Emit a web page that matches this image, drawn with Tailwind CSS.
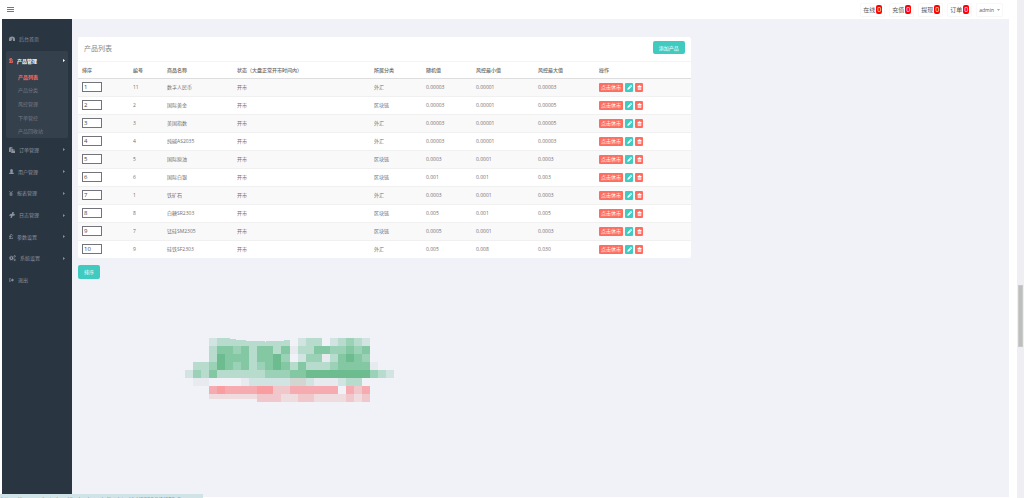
<!DOCTYPE html>
<html lang="zh-CN">
<head>
<meta charset="utf-8">
<title>产品列表</title>
<script src="https://cdn.jsdelivr.net/npm/@tailwindcss/browser@4"></script>
</head>
<body class="flex min-h-screen bg-white font-['Open_Sans','Noto_Sans_CJK_SC',sans-serif] text-[5px] leading-[8px] text-[#707070]">
<svg class="hidden">
  <symbol id="caret" viewBox="0 0 4 6"><path d="M0 0 4 3 0 6Z" fill="currentColor"/></symbol>
  <symbol id="pencil" viewBox="0 0 16 16"><path d="M1 15l1-5 7-7 4 4-7 7zM10 2l1.500-1.500q1-.7 2 .2l1.800 1.800q.9 1 .2 2L14 6z" fill="currentColor"/></symbol>
  <symbol id="trash" viewBox="0 0 16 16"><path fill-rule="evenodd" d="M1 3h4l1-2h4l1 2h4v2h-1.500v10h-11V5H1zM5 6v7h1.200V6zM7.400 6v7h1.200V6zM9.800 6v7H11V6z" fill="currentColor"/></symbol>
</svg>

<div class="flex min-w-0 flex-1 flex-col">
  <header class="flex h-[19px] items-center justify-between pr-[14px] pl-[7px]">
    <button type="button" aria-label="菜单" class="flex h-[7px] w-[7px] flex-col justify-between py-px">
      <span class="h-px w-full bg-[#777]"></span><span class="h-px w-full bg-[#777]"></span><span class="h-px w-full bg-[#777]"></span>
    </button>
    <nav class="flex items-center gap-[4px] text-[6px] text-[#555]">
      <a href="#" class="flex h-[14px] items-center rounded-[2px] border border-[#f8f8f8] px-[2px]">在线<span class="ml-px flex h-[9px] w-[6px] items-center justify-center rounded-[2px] bg-[#f00] text-[7px] text-white">0</span></a>
      <a href="#" class="flex h-[14px] items-center rounded-[2px] border border-[#f8f8f8] px-[2px]">充值<span class="ml-px flex h-[9px] w-[6px] items-center justify-center rounded-[2px] bg-[#f00] text-[7px] text-white">0</span></a>
      <a href="#" class="flex h-[14px] items-center rounded-[2px] border border-[#f8f8f8] px-[2px]">提现<span class="ml-px flex h-[9px] w-[6px] items-center justify-center rounded-[2px] bg-[#f00] text-[7px] text-white">0</span></a>
      <a href="#" class="flex h-[14px] items-center rounded-[2px] border border-[#f8f8f8] px-[2px]">订单<span class="ml-px flex h-[9px] w-[6px] items-center justify-center rounded-[2px] bg-[#f00] text-[7px] text-white">0</span></a>
      <button type="button" class="flex h-[14px] items-center gap-[3px] rounded-[2px] border border-[#f8f8f8] px-[2px] text-[5px]">admin
        <svg class="w-[3px]" viewBox="0 0 6 4"><path d="M0 0h6L3 4z" fill="#aaa"/></svg></button>
    </nav>
  </header>

  <div class="mb-px flex flex-1 pr-[8px] pl-[2px]">
    <aside class="mb-[3px] w-[70px] shrink-0 bg-[#2a3542] px-1 pt-[9px] text-[#8b929c]">
      <a href="#" class="flex h-[22px] items-center gap-[4px] pl-[3px]">
        <svg class="w-[6px]" viewBox="0 0 16 14"><path d="M0 13V8a8 7 0 0 1 16 0v5h-5L9 5H7.500L8 9 6 13z" fill="currentColor"/></svg>后台首页</a>
      <div class="mt-px h-[87px] rounded-[2px] bg-[#35404d]">
        <a href="#" class="flex h-[19px] items-center gap-[4px] pr-[3px] pl-[3px] text-white">
          <svg class="w-[4px]" viewBox="0 0 10 14"><path fill-rule="evenodd" d="M0 2h3V0h1.500v2H6V0h1.500v2.300Q11 4 8 7q4 3 .5 5L7 12.300V14H5.500v-1.500H4V14H2.500v-1.500H0V11h1.500V4H0zM4 4v2h3V4zM4 8v2.500h3V8z" fill="#ff6c60"/></svg>
          <span class="flex-1 font-semibold">产品管理</span><svg class="w-[2px]" viewBox="0 0 4 6"><use href="#caret"/></svg></a>
        <ul class="flex h-[68px] flex-col pl-[12px] text-[#727b86]">
          <li class="flex flex-1 items-center"><a href="#" class="font-semibold text-[#ff6c60]">产品列表</a></li>
          <li class="flex flex-1 items-center"><a href="#">产品分类</a></li>
          <li class="flex flex-1 items-center"><a href="#">风控管理</a></li>
          <li class="flex flex-1 items-center"><a href="#">下单管控</a></li>
          <li class="flex flex-1 items-center"><a href="#">产品回收站</a></li>
        </ul>
      </div>
      <nav class="mt-px flex h-[152px] flex-col">
        <a href="#" class="flex flex-1 items-center gap-[4px] px-[3px]"><svg class="w-[6px]" viewBox="0 0 16 16"><path d="M0 1h3V0h4v1h3v3H5v9H0zM6 5h5v4h5v7H6zM12 5l4 3h-4z" fill="currentColor"/></svg><span class="flex-1">订单管理</span><svg class="w-[2px]" viewBox="0 0 4 6"><use href="#caret"/></svg></a>
        <a href="#" class="flex flex-1 items-center gap-[4px] px-[3px]"><svg class="w-[5px]" viewBox="0 0 14 15"><path d="M7 0q4 0 4 4.500T9 9q5 .5 5 6H0q0-5.500 5-6-2-1-2-4.500T7 0z" fill="currentColor"/></svg><span class="flex-1">用户管理</span><svg class="w-[2px]" viewBox="0 0 4 6"><use href="#caret"/></svg></a>
        <a href="#" class="flex flex-1 items-center gap-[4px] px-[3px]"><svg class="w-[4px]" viewBox="0 0 10 13"><path d="M1 0l4 6 4-6M5 6v7M1 7h8M1 10h8" fill="none" stroke="currentColor" stroke-width="1.800"/></svg><span class="flex-1">报表管理</span><svg class="w-[2px]" viewBox="0 0 4 6"><use href="#caret"/></svg></a>
        <a href="#" class="flex flex-1 items-center gap-[4px] px-[3px]"><svg class="w-[6px]" viewBox="0 0 16 16"><path d="M0 10l3-5h4l2-5h4l-1 5h4l-2 5h-4l-3 6H4l1-6z" fill="currentColor"/></svg><span class="flex-1">日志管理</span><svg class="w-[2px]" viewBox="0 0 4 6"><use href="#caret"/></svg></a>
        <a href="#" class="flex flex-1 items-center gap-[4px] px-[3px]"><svg class="w-[4px]" viewBox="0 0 10 13"><path d="M9 4Q8 1 5.500 1 3 1 3 4v8M0 6.500h7M0 12h9V9" fill="none" stroke="currentColor" stroke-width="2"/></svg><span class="flex-1">参数设置</span><svg class="w-[2px]" viewBox="0 0 4 6"><use href="#caret"/></svg></a>
        <a href="#" class="flex flex-1 items-center gap-[4px] px-[3px]"><svg class="w-[7px]" viewBox="0 0 18 16"><g fill="none" stroke="currentColor"><circle cx="6" cy="8" r="3.500" stroke-width="3"/><circle cx="6" cy="8" r="5.500" stroke-width="1.500" stroke-dasharray="2.300 2"/><circle cx="14.500" cy="3.500" r="2" stroke-width="2"/><circle cx="14.500" cy="12.500" r="2" stroke-width="2"/></g></svg><span class="flex-1">系统设置</span><svg class="w-[2px]" viewBox="0 0 4 6"><use href="#caret"/></svg></a>
        <a href="#" class="flex flex-1 items-center gap-[4px] px-[3px]"><svg class="w-[5px]" viewBox="0 0 16 13"><path d="M6 1H3Q1 1 1 3v7q0 2 2 2h3" fill="none" stroke="currentColor" stroke-width="2"/><path d="M5 4.500h5V1l6 5.500-6 5.500V8.500H5z" fill="currentColor"/></svg><span class="flex-1">退出</span></a>
      </nav>
    </aside>

    <main class="min-w-0 flex-1 bg-[#f1f2f7] pt-[18px]">
      <section class="w-2/3 px-[6px]">
        <div class="rounded-[2px] bg-white">
          <div class="flex h-[25px] items-center justify-between border-b border-[#f3f4f5] px-[6px]">
            <h1 class="text-[7px] text-[#888]">产品列表</h1>
            <button type="button" class="mb-[3px] h-[13px] w-[32px] rounded-[2px] bg-[#41cac0] text-white">添加产品</button>
          </div>
          <table class="w-full table-fixed border-collapse text-left">
            <colgroup><col class="w-[51px]"><col class="w-[34px]"><col class="w-[70px]"><col class="w-[137px]"><col class="w-[52px]"><col class="w-[50px]"><col class="w-[62px]"><col class="w-[61px]"><col class="w-[96px]"></colgroup>
            <thead class="text-[#666]"><tr class="h-[16px] border-b border-[#ddd] *:pl-[4px] *:font-medium"><th>排序</th><th>编号</th><th>商品名称</th><th>状态（大盘正常开市时间内）</th><th>所属分类</th><th>随机值</th><th>风控最小值</th><th>风控最大值</th><th>操作</th></tr></thead>
            <tbody id="rows"></tbody>
          </table>
        </div>
        <button type="button" class="mt-[7px] block h-[14px] w-[22px] rounded-[2px] bg-[#41cac0] text-white">排序</button>
      </section>
      <svg id="mosaic" class="mt-[59px] ml-[113px] block w-[209px]" viewBox="0 0 208 64" shape-rendering="crispEdges"></svg>
    </main>
  </div>
</div>

<div class="flex w-[7px] shrink-0 flex-col bg-[#efeef2] px-px">
  <div class="h-[285px]"></div>
  <div class="h-[62px] border border-[#cacaca] bg-[#bcc0bc]"></div>
</div>

<div class="fixed bottom-0 left-0 h-[4px] w-[203px] overflow-hidden bg-[#d0e4e8] pl-px text-[6px] leading-[10px] whitespace-nowrap text-[#70979b]">https://www.admin.local/index/goods/list.html/id/2000/UNSFS_0</div>

<template id="row">
  <tr class="h-[18px] border-b border-[#f0f0f0] odd:bg-[#f9f9f9] last:border-b-0 *:p-0 *:pl-[4px]">
    <td><input type="text" aria-label="排序" class="block h-[10px] w-[20px] border border-[#73737b] bg-white px-px text-[6px] leading-[8px] text-[#444]"></td>
    <td></td><td></td><td></td><td></td><td></td><td></td><td></td>
    <td><div class="flex gap-[2px] text-white">
      <button type="button" class="h-[9px] w-[24px] rounded-[1px] bg-[#ff6c60]">点击休市</button>
      <button type="button" aria-label="编辑" class="flex h-[9px] w-[8px] items-center justify-center rounded-[1px] bg-[#41cac0]"><svg class="h-[5px] w-[5px]"><use href="#pencil"/></svg></button>
      <button type="button" aria-label="删除" class="flex h-[9px] w-[8px] items-center justify-center rounded-[1px] bg-[#ff6c60]"><svg class="h-[5px] w-[5px]"><use href="#trash"/></svg></button>
    </div></td>
  </tr>
</template>
<script>
const data = [
  [1,11,'数字人民币','外汇','0.00003','0.00001','0.00003'],
  [2,2,'国际黄金','区块链','0.00003','0.00001','0.00005'],
  [3,3,'美国指数','外汇','0.00003','0.00001','0.00005'],
  [4,4,'纯碱AS2035','外汇','0.00003','0.00001','0.00003'],
  [5,5,'国际原油','区块链','0.0003','0.0001','0.0003'],
  [6,6,'国际白银','区块链','0.001','0.001','0.003'],
  [7,1,'铁矿石','外汇','0.0003','0.0001','0.0003'],
  [8,8,'白糖SR2303','区块链','0.005','0.001','0.005'],
  [9,7,'锰硅SM2305','区块链','0.0005','0.0001','0.0003'],
  [10,9,'硅铁SF2303','外汇','0.005','0.008','0.030']
];
const tpl = document.getElementById('row');
for (const [order, id, name, cat, rnd, min, max] of data) {
  const row = tpl.content.cloneNode(true);
  row.querySelector('input').value = order;
  const cells = row.querySelectorAll('td');
  [id, name, '开市', cat, rnd, min, max].forEach((v, i) => { cells[i + 1].textContent = v; });
  document.getElementById('rows').append(row);
}

// Pixelated block: one letter per 8px tile
const colors = {a:'#6dbc90',b:'#84c7a3',c:'#9bd1b6',d:'#b7dbcd',e:'#d1e4e2',f:'#e7ebf0',g:'#d2d6d0',R:'#f99da0',S:'#f6abb0',T:'#f0c7ca',U:'#eedcde'};
const tiles = [
  '...eddddddddd.edd.edcde...',
  '...dbbcbdbbdbfddbbccbcb...',
  '...dabbbdbbac.eccfdbabc...',
  '.ddcabcbdcbabdbdddcbbbbf..',
  'ecdbddddddcccbbaaaaaaaacde',
  '.ff....feeeeeggefffedd....',
  '...SRSSSSRRTTSSSSSS.STS...',
  '...UUUUUUTTTUUTTUUUUTUT...'
];
const ns = 'http://www.w3.org/2000/svg', svg = document.getElementById('mosaic');
tiles.forEach((line, y) => [...line].forEach((c, x) => {
  if (!colors[c]) return;
  const r = document.createElementNS(ns, 'rect');
  r.setAttribute('x', x * 8); r.setAttribute('y', y * 8);
  r.setAttribute('width', 8); r.setAttribute('height', y === 7 && x < 9 ? 5 : 8);
  r.setAttribute('fill', colors[c]);
  svg.append(r);
}));
const curve = document.createElementNS(ns, 'path');
curve.setAttribute('d', 'M42 0Q56 3 80 3.500Q95 3 104 2V0Z');
curve.setAttribute('fill', '#f1f2f7');
svg.append(curve);
</script>
</body>
</html>
